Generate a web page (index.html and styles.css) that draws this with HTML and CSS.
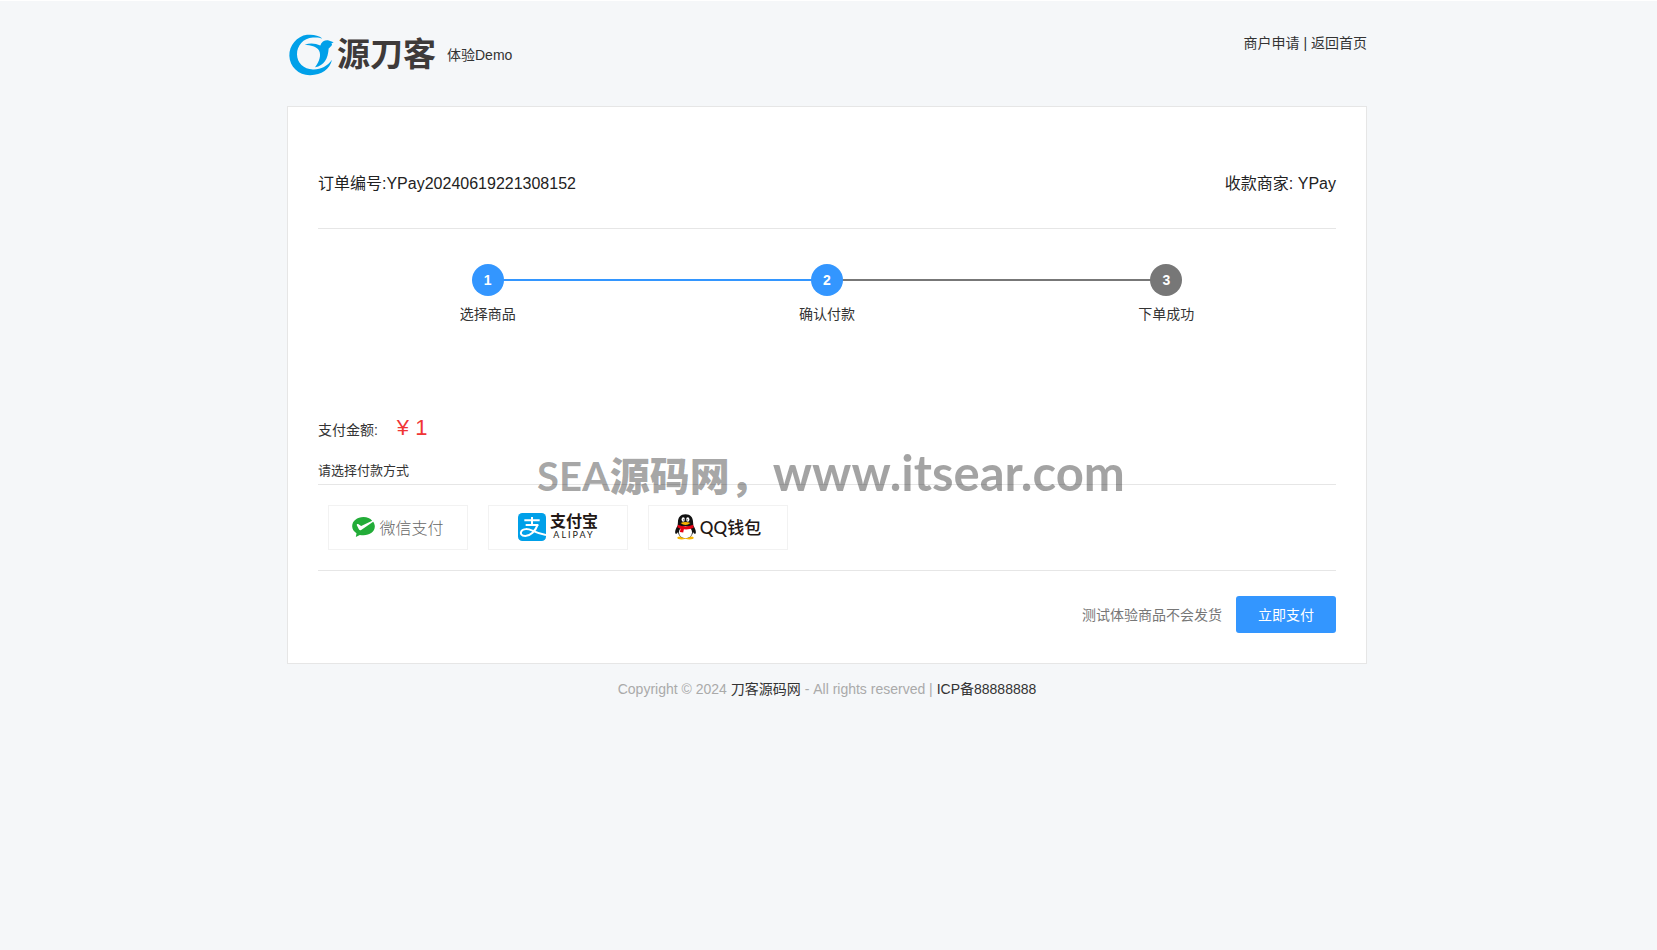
FILE: index.html
```html
<!DOCTYPE html>
<html lang="zh-CN">
  <head>
    <meta charset="UTF-8" />
    <meta name="viewport" content="width=device-width, initial-scale=1.0" />
    <title>体验Demo</title>
    <link rel="stylesheet" href="styles.css">
  </head>
  <body>
    <header class="header container">
      <div class="brand">
        <a class="logo" href="/">
          <svg class="logo-mark" viewBox="0 0 135 125" aria-hidden="true">
            <path fill="#00a0e9" d="M100 13C88 3 72 0 54 2C24 6 0 34 1 65C2 99 30 124 64 123C98 122 122 106 129 77C115 97 94 107 72 106C44 104 24 86 24 60C24 35 42 12 72 10C84 9 92 10 100 13Z"/>
            <path fill="#00a0e9" d="M47 32C63 25 79 27 94 34C97 22 109 17 119 19L134 24L127 28C132 31 127 36 119 43C117 73 106 95 78 99C92 82 97 62 90 49C83 37 65 34 47 32Z"/>
          </svg>
          <span class="logo-text">源刀客</span>
        </a>
        <span>体验Demo</span>
      </div>
      <nav class="top-nav">
        <a href="/apply">商户申请</a> | <a href="/">返回首页</a>
      </nav>
    </header>

    <main class="card container">
      <div class="order">
        <span>订单编号:YPay20240619221308152</span>
        <span>收款商家: YPay</span>
      </div>

      <ol class="steps">
        <li class="step done"><b>1</b><span>选择商品</span></li>
        <li class="step done"><b>2</b><span>确认付款</span></li>
        <li class="step"><b>3</b><span>下单成功</span></li>
      </ol>

      <form class="pay-form">
        <div class="amount">支付金额: <strong>¥ 1</strong></div>
        <h2 class="pay-title">请选择付款方式</h2>
        <div class="methods">
          <button class="method" type="button">
            <svg class="icon-wechat" viewBox="0 0 68 60" aria-hidden="true">
              <path fill="#22ac38" d="M34 0C15 0 0 12 0 28C0 37 5 44 13 49L11 60L23 54C27 55 30 55 34 55C53 55 68 44 68 28C68 23 66 18 63 14L27 39C24 41 22 40 20 37L14 25C13 22 16 20 19 22L27 27L60 11C54 4 45 0 34 0Z"/>
            </svg>
            <span class="wechat-text">微信支付</span>
          </button>
          <button class="method" type="button">
            <svg class="icon-alipay" viewBox="0 0 84 84" aria-hidden="true">
              <rect width="84" height="84" rx="13" fill="#00a0e9"/>
              <g fill="none" stroke="#fff" stroke-width="6">
                <path d="M42 12V36M19 22H65M23 36H61"/>
                <path d="M59 35C53 54 36 69 22 69C9 69 7 61 10 55C15 46 30 47 43 53C56 59 70 64 84 66"/>
              </g>
            </svg>
            <span class="alipay-text">支付宝<small>ALIPAY</small></span>
          </button>
          <button class="method" type="button">
            <svg class="icon-qq" viewBox="0 0 64 78" aria-hidden="true">
              <ellipse cx="20" cy="72" rx="13" ry="5" fill="#f8b500"/>
              <ellipse cx="44" cy="72" rx="13" ry="5" fill="#f8b500"/>
              <path fill="#111" d="M32 0C17 0 9 10 9 24L8 35C3 43-1 51 1 58C2 62 6 59 9 55C11 66 20 73 32 73C44 73 53 66 55 55C58 59 62 62 63 58C65 51 61 43 56 35L55 24C55 10 47 0 32 0Z"/>
              <ellipse cx="32" cy="55" rx="20" ry="18" fill="#fff"/>
              <ellipse cx="25" cy="16" rx="5" ry="7" fill="#fff"/>
              <ellipse cx="39" cy="16" rx="5" ry="7" fill="#fff"/>
              <circle cx="27" cy="17" r="2"/>
              <circle cx="37" cy="17" r="2"/>
              <path fill="#f8b500" d="M17 27Q32 20 47 27Q32 39 17 27Z"/>
              <path fill="#e60012" d="M9 32Q32 43 55 32L57 41Q43 48 27 46L25 56L15 54L17 44L7 40Z"/>
            </svg>
            <span class="qq-text">QQ钱包</span>
          </button>
        </div>
        <div class="submit-row">
          <span>测试体验商品不会发货</span>
          <button class="submit" type="submit">立即支付</button>
        </div>
      </form>

      <div class="watermark"><span>SEA</span><b>源码网，</b><em>www.itsear.com</em></div>
    </main>

    <footer class="footer">
      Copyright © 2024 <a href="/">刀客源码网</a> - All rights reserved | <a href="/icp">ICP备88888888</a>
    </footer>
  </body>
</html>
```
FILE: styles.css
```css
* {
  box-sizing: border-box;
}

body {
  margin: 0;
  padding: 0 3px 0 0;
  border-top: 1px solid #fff;
  background-color: #f5f7f9;
  color: #333;
  font-family: "Liberation Sans", "Noto Sans CJK SC", sans-serif;
  font-size: 14px;
  line-height: 20px;
}

a {
  color: #333;
  text-decoration: none;
}

a:hover {
  color: #3396ff;
}

button {
  font-family: inherit;
  cursor: pointer;
}

.container {
  width: 100%;
  max-width: 1080px;
  margin: 0 auto;
}

/* header */
.header {
  display: flex;
  justify-content: space-between;
  height: 105px;
  padding-top: 32px;
}

.brand,
.logo {
  display: flex;
  align-items: center;
}

.brand {
  height: 44px;
  gap: 11px;
}

.logo {
  gap: 3px;
  padding-left: 2px;
}

.logo-mark {
  width: 45px;
  height: 42px;
}

.logo-text {
  color: #3e3a39;
  font-size: 33px;
  font-weight: bold;
  line-height: 40px;
}

/* card */
.card {
  position: relative;
  padding: 48px 30px 30px;
  border: 1px solid #e6e6e6;
  background-color: #fff;
}

.order {
  display: flex;
  justify-content: space-between;
  padding: 17px 0 32px;
  border-bottom: 1px solid #e6e6e6;
  color: #222;
  font-size: 16px;
  line-height: 24px;
}

/* steps */
.steps {
  display: flex;
  margin: 0;
  padding: 35px 0 88px;
  list-style: none;
}

.step {
  position: relative;
  display: flex;
  flex: 1;
  flex-direction: column;
  align-items: center;
  gap: 8px;
}

.step b {
  position: relative;
  z-index: 1;
  width: 32px;
  border-radius: 50%;
  background-color: #777;
  color: #fff;
  line-height: 32px;
  text-align: center;
}

.step.done b {
  background-color: #3396ff;
}

/* line back to the previous step */
.step + .step::before {
  content: "";
  position: absolute;
  top: 15px;
  right: 50%;
  width: 100%;
  height: 2px;
  background-color: #777;
}

.step + .step.done::before {
  background-color: #3396ff;
}

.amount {
  line-height: 32px;
}

.amount strong {
  margin-left: 15px;
  color: #f03535;
  font-size: 22px;
  font-weight: normal;
}

.pay-title {
  margin: 15px 0 0;
  padding-bottom: 3px;
  border-bottom: 1px solid #e6e6e6;
  font-size: 13px;
  font-weight: normal;
}

.methods {
  display: flex;
  flex-wrap: wrap;
  gap: 20px;
  padding: 20px 10px;
  border-bottom: 1px solid #e6e6e6;
}

.method {
  display: flex;
  align-items: center;
  justify-content: center;
  width: 140px;
  height: 45px;
  padding: 0 0 2px;
  border: 1px solid #f2f2f2;
  background-color: #fff;
  color: #231815;
  gap: 4px;
}

.icon-wechat {
  width: 23px;
  height: 20px;
}

.icon-alipay {
  width: 28px;
  height: 28px;
}

.icon-qq {
  width: 21px;
  height: 26px;
}

.wechat-text {
  color: #666;
  font-size: 16px;
  font-weight: 300;
}

.alipay-text {
  font-size: 16px;
  font-weight: bold;
  line-height: 16px;
}

.alipay-text small {
  display: block;
  font-family: Lato, sans-serif;
  font-size: 9px;
  font-weight: normal;
  letter-spacing: 2px;
  line-height: 9px;
}

.qq-text {
  font-family: Lato, "Noto Sans CJK SC", sans-serif;
  font-size: 17px;
  font-weight: 500;
}

.submit-row {
  display: flex;
  align-items: center;
  justify-content: flex-end;
  gap: 14px;
  padding-top: 25px;
  color: #777;
}

.submit {
  width: 100px;
  height: 37px;
  padding: 0 0 2px;
  border: 0;
  border-radius: 3px;
  background-color: #3396ff;
  color: #fff;
  font-size: 14px;
}

.submit:hover {
  background-color: #1f85f0;
}

.watermark {
  position: absolute;
  top: 335px;
  left: 249px;
  display: flex;
  align-items: baseline;
  color: rgba(0, 0, 0, 0.36);
  font-family: Lato, "Noto Sans CJK SC", sans-serif;
  font-size: 40px;
  font-weight: bold;
  line-height: 60px;
  white-space: nowrap;
  pointer-events: none;
}

.watermark b {
  font-weight: 900;
}

.watermark em {
  margin-left: 3px;
  font-size: 49px;
  font-style: normal;
}

/* footer */
.footer {
  padding: 15px 0;
  color: #aaa;
  text-align: center;
}
```
